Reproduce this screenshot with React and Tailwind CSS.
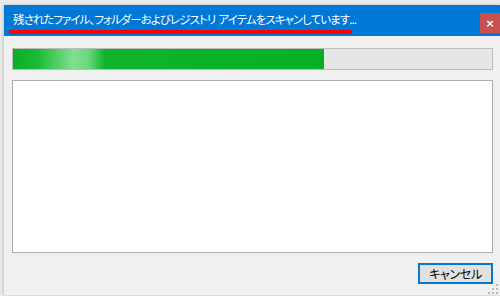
import React from 'react';

const jp = "font-['Meiryo_UI','Noto_Sans_CJK_JP',sans-serif] [font-feature-settings:'palt']";

const ResizeGrip = () => (
    <svg width="10" height="10" viewBox="0 0 10 10" className="absolute right-[2px] bottom-[1px]">
        <rect x="8" y="0" width="2" height="2" fill="#b8b8b8" />
        <rect x="4" y="4" width="2" height="2" fill="#b8b8b8" />
        <rect x="8" y="4" width="2" height="2" fill="#b8b8b8" />
        <rect x="0" y="8" width="2" height="2" fill="#b8b8b8" />
        <rect x="4" y="8" width="2" height="2" fill="#b8b8b8" />
        <rect x="8" y="8" width="2" height="2" fill="#b8b8b8" />
    </svg>
);

const App = () => {
    const progress = 65;

    return (
        <div className="w-[500px] h-[296px] bg-[#ebebeb] pl-[4px] pt-[5px] overflow-hidden">
            <div className="w-[496px] h-[290px] flex flex-col shadow-[-1px_0_3px_rgba(0,0,0,0.18)]">
                {/* title bar */}
                <div className="relative h-[31px] bg-[#0078d7] flex items-center pl-[9px] shrink-0">
                    <span className={`${jp} text-white text-[11.5px] leading-none tracking-[-0.95px] -mt-[2px] whitespace-pre`}>
                        {'残されたファイル、フォルダーおよびレジストリ  アイテムをスキャンしています...'}
                    </span>
                    <div className="absolute left-[5px] top-[25px] w-[343px] h-[4px] bg-[#ff0000]" />
                    <div className="absolute right-0 top-[8px] w-[20px] h-[20px] bg-[#c75050] flex items-center justify-center text-white text-[11px] font-bold font-['DejaVu_Sans',sans-serif] leading-none">
                        ×
                    </div>
                </div>

                {/* body */}
                <div className="relative flex-1 bg-[#f0f0f0] pl-[8px] pr-[7px] pt-[12px] flex flex-col">
                    <div className="h-[22px] border border-[#bcbcbc] bg-[#e6e6e6] shrink-0">
                        <div
                            className="h-full bg-[linear-gradient(to_right,#06b025_0px,#1cba38_25px,#7fe08f_60px,#6ad97c_75px,#0fb42c_92px,#06b025_100%)]"
                            style={{ width: `${progress}%` }}
                        />
                    </div>

                    <div className="mt-[10px] h-[173px] bg-white border border-[#adadad] shrink-0" />

                    <div className="flex justify-end mt-[10px]">
                        <button className={`${jp} w-[75px] h-[21px] bg-[#e1e1e1] border-2 border-[#0078d7] text-[12px] text-black leading-none flex items-center justify-center tracking-[-0.3px]`}>
                            キャンセル
                        </button>
                    </div>

                    <ResizeGrip />
                </div>
            </div>
        </div>
    );
};

export default App;
